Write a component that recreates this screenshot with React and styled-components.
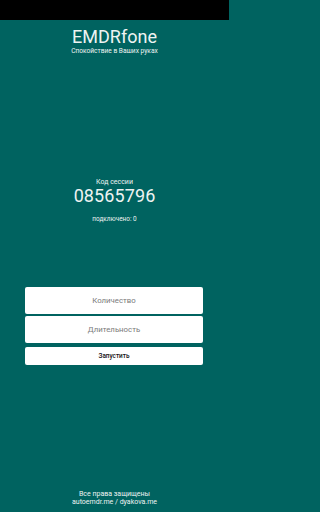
import React from "react";
import styled, { createGlobalStyle } from "styled-components";

const GlobalStyle = createGlobalStyle`
  html, body {
    margin: 0;
    padding: 0;
    background: #006360;
  }
  * {
    box-sizing: border-box;
  }
`;

const Page = styled.div`
  display: flex;
  flex-direction: column;
  width: 229px;
  height: 100vh;
  background: #006360;
  color: #eef3f2;
  font-family: Roboto, "Noto Sans", sans-serif;
  text-align: center;
`;

const StatusBar = styled.div`
  height: 20px;
  flex-shrink: 0;
  background: #000;
`;

const Header = styled.header`
  display: flex;
  flex-direction: column;
  margin-top: 6px;
`;

const Title = styled.h1`
  margin: 0;
  font-size: 18px;
  line-height: 21px;
  font-weight: 400;
`;

const Subtitle = styled.div`
  font-size: 6.6px;
  line-height: 9px;
  font-weight: 400;
`;

const Session = styled.section`
  display: flex;
  flex-direction: column;
  margin-top: 122px;
`;

const Label = styled.div`
  font-size: ${(p) => p.size || 7}px;
  line-height: 8px;
  margin-top: ${(p) => p.gap || 0}px;
`;

const Code = styled.div`
  font-size: 18px;
  line-height: 19px;
  letter-spacing: 0.1px;
`;

const Form = styled.form`
  display: flex;
  flex-direction: column;
  gap: 2px;
  margin-top: 64px;
  padding: 0 26px 0 25px;
`;

const Field = styled.input`
  height: 27px;
  border: none;
  border-radius: 2px;
  background: #fff;
  text-align: center;
  font-family: Roboto, sans-serif;
  font-size: 7.8px;
  color: #333;
  outline: none;
  &::placeholder {
    color: #7a7a7a;
  }
`;

const StartButton = styled.button`
  height: 18px;
  margin-top: 2px;
  border: none;
  border-radius: 2px;
  background: #fff;
  color: #111;
  font-family: Roboto, sans-serif;
  font-size: 6.4px;
  font-weight: 500;
  padding: 0;
`;

const Footer = styled.footer`
  margin-top: auto;
  padding-bottom: 6px;
  display: flex;
  flex-direction: column;
`;

export default function App() {
  return (
    <>
      <GlobalStyle />
      <Page>
        <StatusBar />
        <Header>
          <Title>EMDRfone</Title>
          <Subtitle>Спокойствие в Ваших руках</Subtitle>
        </Header>
        <Session>
          <Label>Код сессии</Label>
          <Code>08565796</Code>
          <Label size={6.4} gap={10}>
            подключено: 0
          </Label>
        </Session>
        <Form onSubmit={(e) => e.preventDefault()}>
          <Field placeholder="Количество" />
          <Field placeholder="Длительность" />
          <StartButton type="submit">Запустить</StartButton>
        </Form>
        <Footer>
          <Label>Все права защищены</Label>
          <Label>autoemdr.me / dyakova.me</Label>
        </Footer>
      </Page>
    </>
  );
}
